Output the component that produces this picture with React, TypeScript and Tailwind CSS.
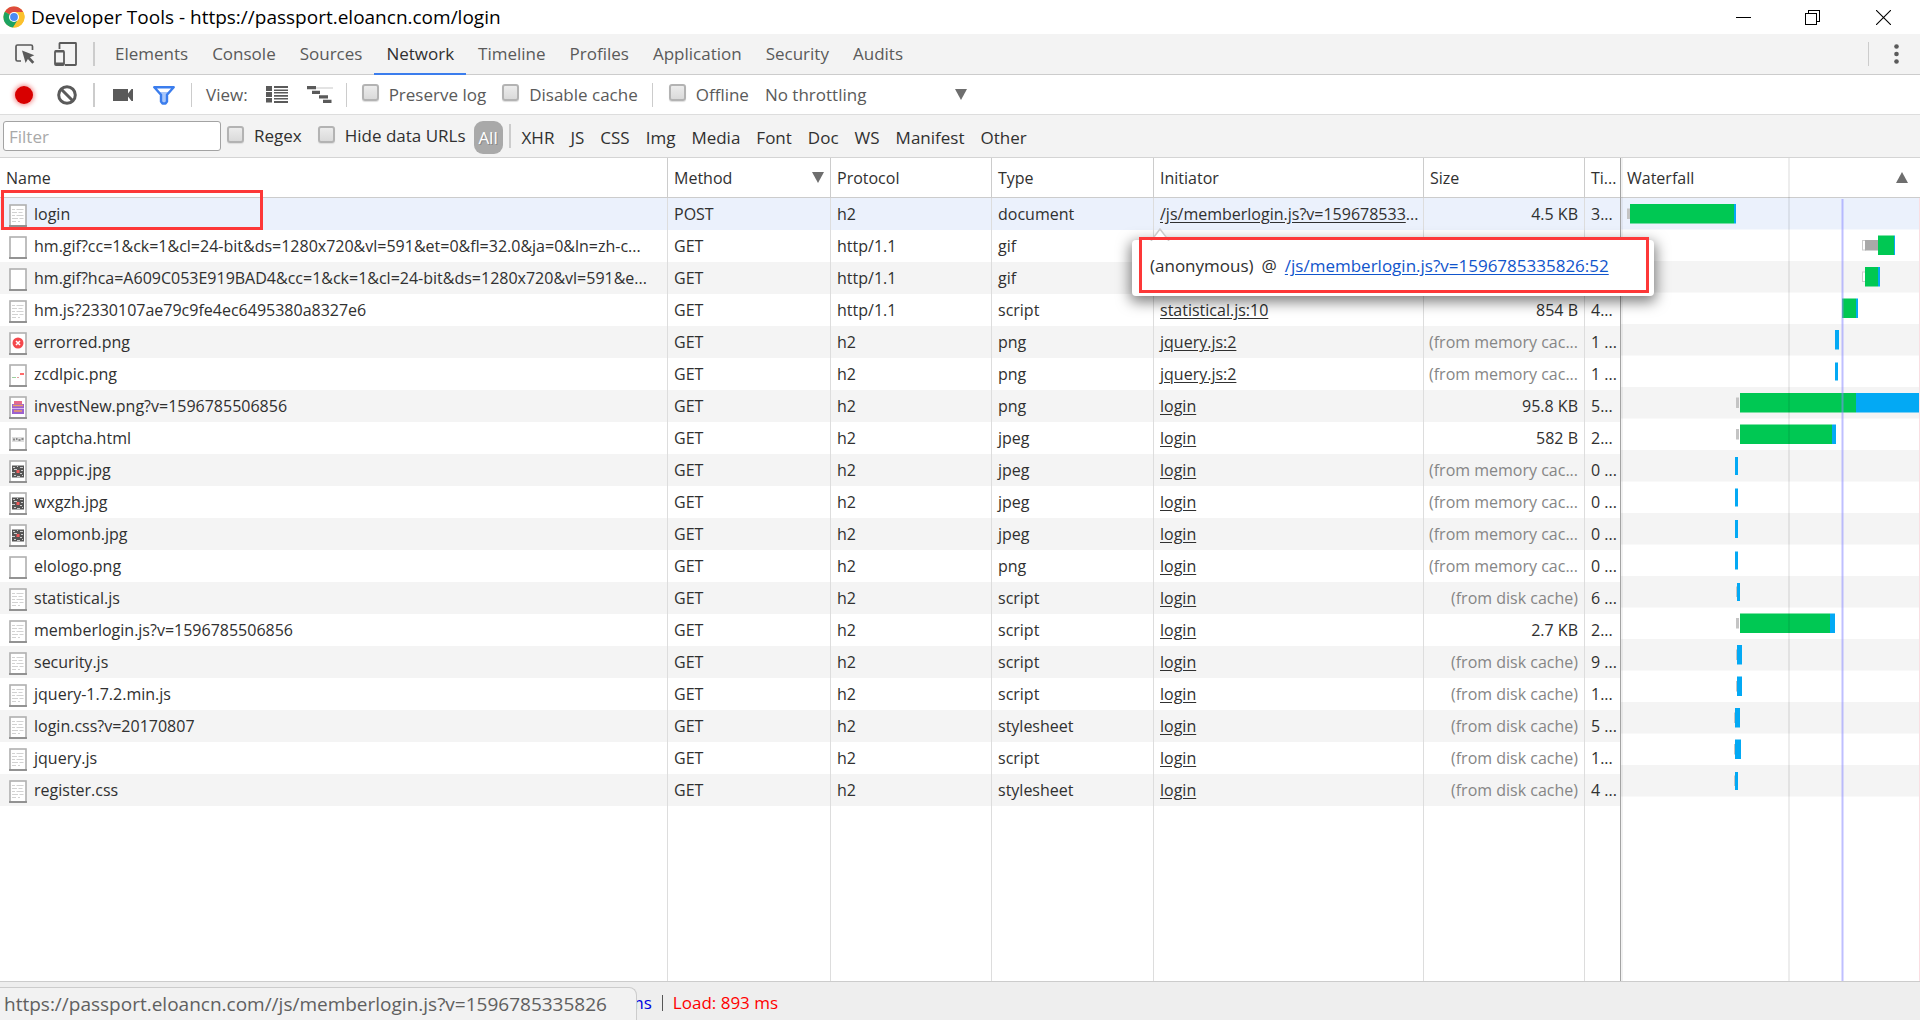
import type { ReactNode } from "react";

type Thumb = "doc" | "blank" | "error" | "strip" | "invest" | "captcha" | "qr";
type Bar = {
  wait?: [number, number];
  queue?: [number, number];
  green?: [number, number];
  blue?: [number, number];
  short?: boolean;
};
type Request = {
  name: string;
  thumb: Thumb;
  method: string;
  protocol: string;
  type: string;
  initiator: string;
  cut?: boolean;
  size: string;
  time: string;
  bar: Bar;
};

const MEM = "(from memory cac...";
const DISK = "(from disk cache)";

// bar values are x positions in the waterfall column
const requests: Request[] = [
  { name: "login", thumb: "doc", method: "POST", protocol: "h2", type: "document", initiator: "/js/memberlogin.js?v=159678533", cut: true, size: "4.5 KB", time: "3...", bar: { wait: [6, 9], green: [9, 113], blue: [113, 115] } },
  { name: "hm.gif?cc=1&ck=1&cl=24-bit&ds=1280x720&vl=591&et=0&fl=32.0&ja=0&ln=zh-c...", thumb: "blank", method: "GET", protocol: "http/1.1", type: "gif", initiator: "", size: "", time: "", bar: { queue: [241, 244], wait: [244, 257], green: [257, 273], blue: [273, 274] } },
  { name: "hm.gif?hca=A609C053E919BAD4&cc=1&ck=1&cl=24-bit&ds=1280x720&vl=591&e...", thumb: "blank", method: "GET", protocol: "http/1.1", type: "gif", initiator: "", size: "", time: "", bar: { queue: [241, 244], green: [244, 257], blue: [257, 259] } },
  { name: "hm.js?2330107ae79c9fe4ec6495380a8327e6", thumb: "doc", method: "GET", protocol: "http/1.1", type: "script", initiator: "statistical.js:10", size: "854 B", time: "4...", bar: { green: [221, 235], blue: [235, 237] } },
  { name: "errorred.png", thumb: "error", method: "GET", protocol: "h2", type: "png", initiator: "jquery.js:2", size: MEM, time: "1 ...", bar: { blue: [214, 218] } },
  { name: "zcdlpic.png", thumb: "strip", method: "GET", protocol: "h2", type: "png", initiator: "jquery.js:2", size: MEM, time: "1 ...", bar: { blue: [214, 217], short: true } },
  { name: "investNew.png?v=1596785506856", thumb: "invest", method: "GET", protocol: "h2", type: "png", initiator: "login", size: "95.8 KB", time: "5...", bar: { wait: [115, 118], green: [119, 235], blue: [235, 299] } },
  { name: "captcha.html", thumb: "captcha", method: "GET", protocol: "h2", type: "jpeg", initiator: "login", size: "582 B", time: "2...", bar: { wait: [115, 118], green: [119, 211], blue: [211, 215] } },
  { name: "apppic.jpg", thumb: "qr", method: "GET", protocol: "h2", type: "jpeg", initiator: "login", size: MEM, time: "0 ...", bar: { blue: [114, 117], short: true } },
  { name: "wxgzh.jpg", thumb: "qr", method: "GET", protocol: "h2", type: "jpeg", initiator: "login", size: MEM, time: "0 ...", bar: { blue: [114, 117], short: true } },
  { name: "elomonb.jpg", thumb: "qr", method: "GET", protocol: "h2", type: "jpeg", initiator: "login", size: MEM, time: "0 ...", bar: { blue: [114, 117], short: true } },
  { name: "elologo.png", thumb: "blank", method: "GET", protocol: "h2", type: "png", initiator: "login", size: MEM, time: "0 ...", bar: { blue: [114, 117], short: true } },
  { name: "statistical.js", thumb: "doc", method: "GET", protocol: "h2", type: "script", initiator: "login", size: DISK, time: "6 ...", bar: { wait: [115, 116], blue: [116, 119], short: true } },
  { name: "memberlogin.js?v=1596785506856", thumb: "doc", method: "GET", protocol: "h2", type: "script", initiator: "login", size: "2.7 KB", time: "2...", bar: { wait: [115, 118], green: [119, 209], blue: [209, 214] } },
  { name: "security.js", thumb: "doc", method: "GET", protocol: "h2", type: "script", initiator: "login", size: DISK, time: "9 ...", bar: { wait: [115, 116], blue: [116, 121] } },
  { name: "jquery-1.7.2.min.js", thumb: "doc", method: "GET", protocol: "h2", type: "script", initiator: "login", size: DISK, time: "1...", bar: { wait: [115, 116], blue: [116, 121] } },
  { name: "login.css?v=20170807", thumb: "doc", method: "GET", protocol: "h2", type: "stylesheet", initiator: "login", size: DISK, time: "5 ...", bar: { wait: [113, 114], blue: [114, 119] } },
  { name: "jquery.js", thumb: "doc", method: "GET", protocol: "h2", type: "script", initiator: "login", size: DISK, time: "1...", bar: { wait: [113, 114], blue: [114, 120] } },
  { name: "register.css", thumb: "doc", method: "GET", protocol: "h2", type: "stylesheet", initiator: "login", size: DISK, time: "4 ...", bar: { wait: [113, 114], blue: [114, 117], short: true } },
];

const tabs = ["Elements", "Console", "Sources", "Network", "Timeline", "Profiles", "Application", "Security", "Audits"];
const filters = ["XHR", "JS", "CSS", "Img", "Media", "Font", "Doc", "WS", "Manifest", "Other"];

export default function App() {
  return (
    <div className="relative flex min-h-screen flex-col overflow-hidden bg-white font-['Open_Sans','Noto_Sans',sans-serif] text-base whitespace-nowrap text-[#303030]">
      <TitleBar />
      <TabBar />
      <ControlBar />
      <FilterBar />
      <main className="relative flex flex-1">
        <RequestTable />
        <Waterfall />
        {/* highlight around the first request */}
        <div className="pointer-events-none absolute top-8 left-px h-10 w-[262px] border-3 border-[#fd3838]" />
        <InitiatorPopup />
      </main>
      <StatusBar />
    </div>
  );
}

function TitleBar() {
  return (
    <header className="flex h-[34px] items-center bg-white pl-[3px] text-[19px] text-black">
      <ChromeLogo />
      <h1 className="ml-1.5 flex-1">Developer Tools - https://passport.eloancn.com/login</h1>
      <button aria-label="Minimize" className="flex w-[69px] justify-center">
        <svg width="15" height="15" shapeRendering="crispEdges">
          <path d="M0 7.5h15" stroke="#000" />
        </svg>
      </button>
      <button aria-label="Restore" className="flex w-[69px] justify-center">
        <svg width="15" height="15" fill="none" stroke="#000" shapeRendering="crispEdges">
          <path d="M.5 3.5h11v11H.5zM3.5 3.5v-3h11v11h-3" />
        </svg>
      </button>
      <button aria-label="Close" className="flex w-[73px] justify-center">
        <svg width="15" height="15" stroke="#000" strokeWidth="1.1">
          <path d="M0 0l15 15M15 0L0 15" />
        </svg>
      </button>
    </header>
  );
}

function TabBar() {
  return (
    <nav className="flex h-[41px] items-center border-b border-[#ccc] bg-[#f3f3f3] text-[17px] text-[#5a5a5a]">
      <button aria-label="Inspect element" className="ml-[15px]">
        <svg width="20" height="20" viewBox="0 0 20 20">
          <path d="M17.5 6V2.500Q17.500 1 16 1H2.500Q1 1 1 2.500V15.500Q1 17 2.500 17H6" fill="none" stroke="#5a5a5a" strokeWidth="1.700" />
          <path d="M7 6.500l12.300 4.700-4.300 2 4.300 4.700-2 1.800-4.400-4.700-2.300 4z" fill="#5a5a5a" />
        </svg>
      </button>
      <button aria-label="Toggle device toolbar" className="ml-[19px]">
        <svg width="23" height="24" viewBox="0 0 23 24" fill="none" stroke="#5a5a5a" strokeWidth="1.800">
          <path d="M5.500 7V1.500Q5.500 1 6 1H21.500Q22 1 22 1.500V22.500Q22 23 21.500 23H11" />
          <rect x="1" y="9" width="9" height="14" rx="1" />
          <path d="M1 9.500h9M1 21.500h9" strokeWidth="2.200" />
        </svg>
      </button>
      <Divider className="mr-2 ml-4 w-0.5" />
      {tabs.map((tab) => (
        <button
          key={tab}
          className={
            tab === "Network"
              ? "relative h-full px-3 text-[#303030] after:absolute after:inset-x-0 after:-bottom-px after:h-0.5 after:bg-[#3b7ded]"
              : "h-full px-3"
          }
        >
          {tab}
        </button>
      ))}
      <Divider className="ml-auto w-px" />
      <button aria-label="More options" className="ml-[22px] mr-4">
        <svg width="13" height="22" fill="#5a5a5a">
          <circle cx="5.500" cy="3.500" r="2.300" />
          <circle cx="5.500" cy="11" r="2.300" />
          <circle cx="5.500" cy="18.500" r="2.300" />
        </svg>
      </button>
    </nav>
  );
}

function ControlBar() {
  return (
    <section aria-label="Network controls" className="flex h-10 items-center border-b border-[#ddd] bg-white text-[17px] text-[#5a5a5a]">
      <button aria-label="Record" className="ml-3 flex size-6 items-center justify-center">
        <span className="size-[18px] rounded-full bg-[#d80000] shadow-[0_0_5px_1px_#f08080]" />
      </button>
      <button aria-label="Clear" className="ml-[21px]">
        <svg width="20" height="20" fill="none" stroke="#5a5a5a" strokeWidth="3">
          <circle cx="10" cy="10" r="8.300" />
          <path d="M4 4l12 12" />
        </svg>
      </button>
      <Divider className="ml-4 w-0.5" />
      <button aria-label="Capture screenshots" className="ml-[18px]">
        <svg width="20" height="14" fill="#5a5a5a">
          <path d="M0 1h15v4.500L18.500 1H20v12h-1.500L15 8.500V13H0z" />
        </svg>
      </button>
      <button aria-label="Filter" className="ml-5">
        <svg width="22" height="20" viewBox="0 0 22 20">
          <path d="M1.500 2.500h19L14 9.500V17l-1.500 1.500h-3L8 17V9.500z" fill="#fff" />
          <path d="M4.500 7h13L14 10v7l-1.500 1.500h-3L8 17v-7z" fill="#a9c7fa" />
          <path d="M1.300 2.200h19.400L14 9.800V16.500L12.500 18.500h-3L8 16.500V9.800z" fill="none" stroke="#3b7ded" strokeWidth="2.400" strokeLinejoin="round" />
        </svg>
      </button>
      <Divider className="ml-4 w-px" />
      <span className="ml-3.5">View:</span>
      <button aria-label="Large request rows" className="ml-[18px]">
        <svg width="22" height="17" fill="#5a5a5a">
          <path d="M0 0h6v5H0zM0 6h6v5H0zM0 12h6v4.500H0zM8 0h14v2H8zM8 3.500h14v1.500H8zM8 6h14v1.500H8zM8 9h14v1.800H8zM8 12h14v1.500H8zM8 15h14v2H8z" />
        </svg>
      </button>
      <button aria-label="Show overview" className="ml-[19px]">
        <svg width="26" height="17" fill="#5a5a5a">
          <path d="M9 1h17v2H9z" fill="#e3e3e3" />
          <path d="M0 0h9v3.300H0zM5 4.800h8V8H5zM12 9.200h9v3.200h-9zM16 13.700h8.500V17H16z" />
        </svg>
      </button>
      <Divider className="ml-[13px] w-px" />
      <Check className="ml-[15px]">Preserve log</Check>
      <Check className="ml-4">Disable cache</Check>
      <Divider className="ml-3.5 w-px" />
      <Check className="ml-4">Offline</Check>
      <span className="relative ml-3.5 flex items-center">
        <select aria-label="Throttling" className="w-[206px] appearance-none bg-transparent pl-0.5 outline-none">
          <option>No throttling</option>
        </select>
        <SortArrow className="pointer-events-none absolute right-0.5" />
      </span>
    </section>
  );
}

function FilterBar() {
  return (
    <section aria-label="Request filters" className="flex h-[43px] items-center border-b border-[#d4d4d4] bg-[#f3f3f3] pl-[3px] text-[17px]">
      <input
        type="text"
        aria-label="Filter"
        placeholder="Filter"
        className="h-[30px] w-[218px] rounded-[3px] border border-[#a3a3a3] bg-white px-[5px] outline-none placeholder:text-[#a9a9a9]"
      />
      <Check className="ml-1.5">Regex</Check>
      <Check className="ml-4">Hide data URLs</Check>
      <button className="ml-2 mt-0.5 h-[33px] w-[29px] rounded-[9px] bg-[#a9a9a9] pt-0.5 text-white [text-shadow:1px_1px_0_#888]">All</button>
      <Divider className="mr-[3px] ml-1.5 w-0.5" />
      {filters.map((name) => (
        <button key={name} className="h-8 px-2 pt-1">
          {name}
        </button>
      ))}
    </section>
  );
}

function RequestTable() {
  return (
    <div className="flex min-w-0 flex-1">
      <table className="w-full table-fixed border-separate border-spacing-0 text-left">
        <colgroup>
          <col />
          <col className="w-[163px]" />
          <col className="w-[161px]" />
          <col className="w-[162px]" />
          <col className="w-[270px]" />
          <col className="w-[161px]" />
          <col className="w-[35px]" />
        </colgroup>
        <thead>
          <tr className="h-10">
            <HeadCell>Name</HeadCell>
            <HeadCell>
              <span className="flex items-center justify-between">
                Method
                <SortArrow />
              </span>
            </HeadCell>
            <HeadCell>Protocol</HeadCell>
            <HeadCell>Type</HeadCell>
            <HeadCell>Initiator</HeadCell>
            <HeadCell>Size</HeadCell>
            <HeadCell>Ti...</HeadCell>
          </tr>
        </thead>
        <tbody>
          {requests.map((req, i) => (
            <tr key={req.name} className={i === 0 ? "h-8 bg-[#ebf1fc]" : i % 2 === 0 ? "h-8 bg-[#f4f4f4]" : "h-8"}>
              <Cell>
                <span className="flex items-center gap-[7px] pl-[3px]">
                  <FileThumb kind={req.thumb} />
                  {req.name}
                </span>
              </Cell>
              <Cell>{req.method}</Cell>
              <Cell>{req.protocol}</Cell>
              <Cell>{req.type}</Cell>
              <Cell>
                {req.initiator && (
                  <a href="#" className="underline underline-offset-2">
                    {req.initiator}
                  </a>
                )}
                {req.cut && "..."}
              </Cell>
              <Cell>
                <span className={req.size.startsWith("(") ? "flex justify-end text-[#868686]" : "flex justify-end"}>{req.size}</span>
              </Cell>
              <Cell>{req.time}</Cell>
            </tr>
          ))}
          {/* empty row carries the column lines to the bottom */}
          <tr>
            {[0, 1, 2, 3, 4, 5, 6].map((i) => (
              <Cell key={i} />
            ))}
          </tr>
        </tbody>
      </table>
    </div>
  );
}

function HeadCell({ children }: { children: ReactNode }) {
  return (
    <th className="overflow-hidden border-r border-b border-[#ccc] px-1.5 font-normal last:border-r-0 last:pr-0">{children}</th>
  );
}

function Cell({ children }: { children?: ReactNode }) {
  return <td className="overflow-hidden border-r border-[#ddd] px-1.5 py-0 last:border-r-0 last:pr-0">{children}</td>;
}

const ROW = 31.5;

function Waterfall() {
  return (
    <aside className="relative flex w-[300px] flex-col border-l border-[#a3a3a3]">
      <div className="flex h-10 items-center justify-between border-b border-[#ccc] pr-3 pl-1.5">
        Waterfall
        <SortArrow className="rotate-180" />
      </div>
      <svg className="w-full flex-1" aria-label="Waterfall">
        {requests.map((req, i) => (
          <g key={req.name}>
            {i % 2 === 0 && <rect x="0" y={i * ROW} width="100%" height={ROW} fill={i === 0 ? "#ebf1fc" : "#f4f4f4"} />}
            <WaterfallBar bar={req.bar} y={i * ROW + 6} />
          </g>
        ))}
        <rect x="220.500" y="1" width="2" height="100%" fill="#8a8aff" opacity=".55" />
        <rect x="298" y="0" width="1" height="100%" fill="#fbdde2" />
      </svg>
      {/* time grid */}
      <div className="pointer-events-none absolute inset-y-0 left-0 w-0.5 bg-black/5" />
      <div className="pointer-events-none absolute inset-y-0 left-[167px] w-0.5 bg-black/7" />
    </aside>
  );
}

function WaterfallBar({ bar, y }: { bar: Bar; y: number }) {
  const top = bar.short ? y + 1 : y;
  const height = bar.short ? 18 : 19.5;
  return (
    <>
      {bar.queue && <rect x={bar.queue[0] + 0.5} y={y + 5} width={bar.queue[1] - bar.queue[0]} height="9.500" fill="#fff" stroke="#ccc" />}
      {bar.wait && <rect x={bar.wait[0]} y={y + 4.5} width={bar.wait[1] - bar.wait[0]} height="10.500" fill={bar.queue ? "#a9a9a9" : "#c4c4c4"} />}
      {bar.green && <rect x={bar.green[0]} y={top} width={bar.green[1] - bar.green[0]} height={height} fill="#00c853" />}
      {bar.blue && <rect x={bar.blue[0]} y={top} width={bar.blue[1] - bar.blue[0]} height={height} fill="#03a9f4" />}
    </>
  );
}

function InitiatorPopup() {
  return (
    <div className="absolute top-[82px] right-[266px] flex h-14 w-[522px] items-center rounded bg-white pb-1 shadow-[0_4px_14px_2px_rgba(0,0,0,0.5)]">
      <svg className="absolute -top-3 left-[18px]" width="20" height="13">
        <path d="M1 13L10 1l9 12" fill="#fff" stroke="#ccc" strokeWidth="1.500" />
      </svg>
      <div className="absolute -top-[3px] left-[7px] h-14 w-[510px] border-3 border-[#fd3838]" />
      <p className="relative flex gap-2 pl-[18px] text-[17px]">
        <span>(anonymous)</span>
        <span>@</span>
        <a href="#" className="text-[#1155cc] underline underline-offset-2">
          /js/memberlogin.js?v=1596785335826:52
        </a>
      </p>
    </div>
  );
}

function StatusBar() {
  return (
    <footer className="relative flex h-[39px] items-center gap-2 border-t border-[#ccc] bg-[#eee] pt-1 pl-[628px] text-[17px]">
      <span className="text-[#0000e0]">ms</span>
      <span className="mx-0.5 h-4 w-px bg-[#555]" />
      <span className="text-[#ff0000]">Load: 893 ms</span>
      <div className="absolute bottom-0 left-0 flex h-[33px] w-[637px] items-center rounded-tr-lg border-t border-r border-[#ccc] bg-[#f2f2f2] pl-1 text-[19px] text-[#606060]">
        https://passport.eloancn.com//js/memberlogin.js?v=1596785335826
      </div>
    </footer>
  );
}

function Divider({ className }: { className: string }) {
  return <span className={`h-6 shrink-0 bg-[#ccc] ${className}`} />;
}

function Check({ className, children }: { className: string; children: ReactNode }) {
  return (
    <label className={`flex items-center gap-2.5 ${className}`}>
      <input
        type="checkbox"
        className="mb-1 size-[17px] appearance-none rounded-[3px] border-2 border-[#b3b3b3] bg-linear-to-b from-[#ececec] to-[#dadada] shadow-[0_1px_1px_#ddd]"
      />
      {children}
    </label>
  );
}

function SortArrow({ className }: { className?: string }) {
  return (
    <svg width="12" height="11" className={className}>
      <path d="M0 0h12L6 11z" fill="#6e6e6e" />
    </svg>
  );
}

function ChromeLogo() {
  return (
    <svg width="22" height="22" viewBox="0 0 48 48">
      <circle cx="24" cy="24" r="23" fill="#fbc12d" />
      <path d="M24 24L4 12.500A23 23 0 0 1 44 13z" fill="#dd4b3e" />
      <path d="M4 12.500A23 23 0 0 0 22 47l11-18-9-5z" fill="#1da362" />
      <path d="M24 13h20a23 23 0 0 1-22 34l11.500-18z" fill="#fbc12d" />
      <circle cx="24" cy="24" r="11" fill="#fff" />
      <circle cx="24" cy="24" r="8.500" fill="#4a8af4" />
    </svg>
  );
}

function FileThumb({ kind }: { kind: Thumb }) {
  return (
    <svg width="18" height="23" viewBox="0 0 18 23" className="mt-[3px] shrink-0">
      <rect x="1" y="1" width="16" height="21" fill="#fff" stroke="#b0b0b0" strokeWidth="1.600" />
      <path d="M0 22h18" stroke="#858585" strokeWidth="1.500" />
      {kind === "doc" && (
        <path d="M3 5.500h3M7.500 5.500h7M3 8.500h5M9.500 8.500h4M3 11.500h3M7.500 11.500h7M3 14.500h6M10.500 14.500h4M3 17.500h4M9 17.500h2" stroke="#d2d2d2" strokeWidth="1.200" />
      )}
      {kind === "error" && (
        <>
          <circle cx="9" cy="11" r="5.500" fill="#f4484c" />
          <path d="M7 9l4 4M11 9l-4 4" stroke="#fff" strokeWidth="1.500" />
        </>
      )}
      {kind === "strip" && (
        <>
          <path d="M3 13.500h4" stroke="#9ed09e" />
          <path d="M8 13.500h2" stroke="#e0a0a0" />
          <path d="M11 10h4" stroke="#ff6b6b" strokeWidth="2" />
        </>
      )}
      {kind === "invest" && (
        <>
          <path d="M5 5h8v3H5z" fill="#e66a8c" />
          <path d="M3 8h12v10H3z" fill="#9b62d0" />
          <path d="M4 9.500h10M5 15h8" stroke="#f0a060" strokeWidth="1.500" />
          <path d="M3 12.500h12" stroke="#d9b8ee" />
        </>
      )}
      {kind === "captcha" && (
        <>
          <path d="M3 9h12v5H3z" fill="#ddd" />
          <path d="M4 11.500h2M7 11h1.500M9.500 12h2M12.500 11h2" stroke="#8a8a8a" strokeWidth="2" />
        </>
      )}
      {kind === "qr" && (
        <>
          <path d="M3 5.500h12v12H3z" fill="#555" />
          <path d="M4 7.500h2M8 6.500h1M11 7.500h3M5 9.500h3M12 10.500h2M3 12.500h3M11 13.500h2M5 15.500h2M8 16.500h3M13 15.500h1" stroke="#ccc" />
          <path d="M7.500 10h3v3h-3z" fill="#f05a5a" />
        </>
      )}
    </svg>
  );
}
